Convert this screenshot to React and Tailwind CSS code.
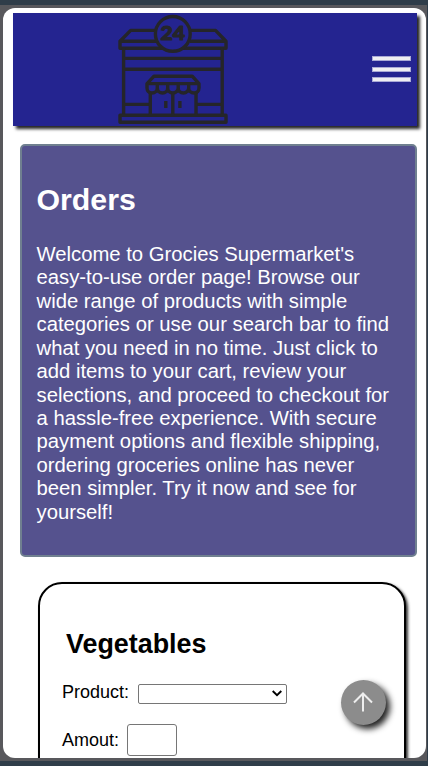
function StoreLogo() {
  return (
    <svg className="h-[112px] w-[125px] shrink-0" viewBox="0 8 125 112" fill="none" stroke="#252529" strokeWidth="3.4" strokeLinejoin="round">
      <path d="M45 25.4H20.7L10 36.3V43.2H116V36.3L105.5 25.4H80M10 36.3H46M80 36.3H116" />
      <path d="M13.6 43V110M112.2 43V110M14 53.4H112M14 64.3H112" />
      <path d="M14 99.4H40M86 99.4H112M10 110.3H116V117.2H10Z" />
      <path d="M37 78.6L44 71.2H82.2L89 78.6H37V83C37 85.6 39 88 42 88S47.3 85.6 47.3 83V79M47.3 83C47.3 85.6 49.6 88 52.5 88S57.7 85.6 57.7 83V79M57.7 83C57.7 85.6 60 88 62.9 88S68.2 85.6 68.2 83V79M68.2 83C68.2 85.6 70.5 88 73.4 88S78.7 85.6 78.7 83V79M78.7 83C78.7 85.6 81 88 84 88S89 85.6 89 83V78.6" />
      <path d="M40.3 88V110M86 88V110M62.8 88V110M55.8 96V103M69.9 96V103" />
      <circle cx="62.8" cy="28.9" r="17.4" fill="#242490" />
      <text x="62.8" y="35.4" textAnchor="middle" textLength="24.5" lengthAdjust="spacingAndGlyphs" fontSize="19.8" fontWeight="900" stroke="#252529" strokeWidth="1.1" fill="#252529" className="font-['Lato',sans-serif]">24</text>
    </svg>
  );
}

function Header() {
  return (
    <header className="flex h-[112.5px] w-[404px] shrink-0 items-start justify-between bg-[#242490] pl-[97px] pr-[6px] shadow-[3px_3px_3px_#252525]">
      <StoreLogo />
      <button aria-label="Menu" className="mt-[43px] flex flex-col gap-[5.5px]">
        <span className="block h-[5px] w-[39px] border border-[#a9a9d5] bg-[#eeeef2]" />
        <span className="block h-[5px] w-[39px] border border-[#a9a9d5] bg-[#eeeef2]" />
        <span className="block h-[5px] w-[39px] border border-[#a9a9d5] bg-[#eeeef2]" />
      </button>
    </header>
  );
}

export default function App() {
  return (
    <div className="h-[766px] w-[428px] overflow-hidden bg-[#2f3d49] pb-[5px] pt-[5px] font-['Liberation_Sans',Arial,sans-serif]">
      <div className="h-[756px] w-[427px] bg-[#58585c] pl-[3px] pt-[3px]">
        <div className="relative flex h-[750px] w-[422.5px] flex-col overflow-hidden rounded-[12px] bg-white pl-[10px] pt-[5px]">
          <Header />
          <section className="ml-[7px] mt-[18.5px] h-[413px] w-[397px] shrink-0 rounded-[5px] border-2 border-[#708090] bg-[#55528e] px-[14.5px] text-white">
            <h1 className="mt-[36px] text-[30.3px] font-bold leading-[35px]">Orders</h1>
            <p className="mt-[25.8px] whitespace-nowrap text-[20.28px] leading-[23.45px]">
              Welcome to Grocies Supermarket's<br />
              easy-to-use order page! Browse our<br />
              wide range of products with simple<br />
              categories or use our search bar to find<br />
              what you need in no time. Just click to<br />
              add items to your cart, review your<br />
              selections, and proceed to checkout for<br />
              a hassle-free experience. With secure<br />
              payment options and flexible shipping,<br />
              ordering groceries online has never<br />
              been simpler. Try it now and see for<br />
              yourself!
            </p>
          </section>
          <section className="ml-[25px] mt-[25px] h-[300px] w-[368px] shrink-0 rounded-[24px] border-2 border-black bg-white pl-[22px] text-black shadow-[2px_2px_3px_#333]">
            <h2 className="ml-[4px] mt-[44px] text-[26.9px] font-bold leading-[32px]">Vegetables</h2>
            <div className="mt-[22px] flex h-[21px] items-center gap-[9px]">
              <label className="text-[18px] leading-[21px]">Product:</label>
              <div className="mt-[2px] flex h-[20px] w-[149px] items-center justify-end rounded-[2px] border border-[#767676] bg-white pr-[4px]">
                <svg className="h-[7px] w-[10px]" viewBox="0 0 10 7" fill="none" stroke="#000" strokeWidth="1.9">
                  <path d="M.7 1L5 5.2L9.3 1" />
                </svg>
              </div>
            </div>
            <div className="mt-[21px] flex h-[32px] items-center gap-[8px]">
              <label className="pt-[1px] text-[18px] leading-[21px]">Amout:</label>
              <input aria-label="Amount" className="h-[32px] w-[50px] rounded-[3px] border border-[#767676] bg-white" />
            </div>
          </section>
          <button aria-label="Back to top" className="absolute left-[337.5px] top-[671.5px] flex h-[45px] w-[45px] items-center justify-center rounded-full bg-[#8c8c8c] shadow-[4px_4px_6px_#222]">
            <svg className="h-[20px] w-[20px]" viewBox="0 0 20 20" fill="none" stroke="#eeeeee" strokeWidth="2">
              <path d="M10 19.5V1.5M1 10.5L10 1.5L19 10.5" />
            </svg>
          </button>
        </div>
      </div>
    </div>
  );
}
